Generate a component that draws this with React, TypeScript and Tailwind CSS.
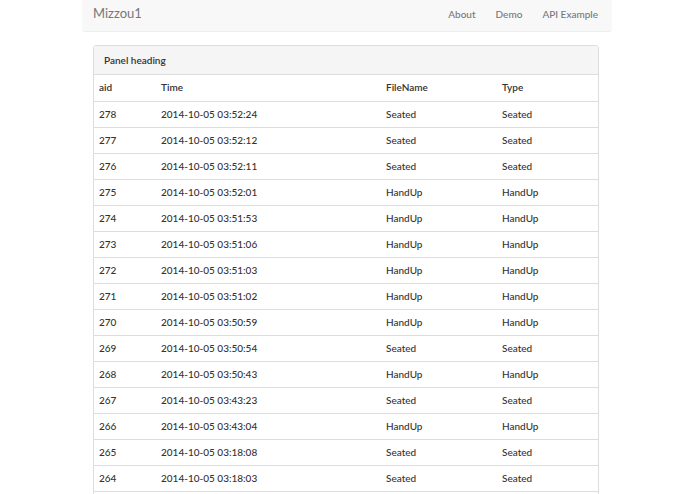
const rows: [number, string, string, string][] = [
  [278, "2014-10-05 03:52:24", "Seated", "Seated"],
  [277, "2014-10-05 03:52:12", "Seated", "Seated"],
  [276, "2014-10-05 03:52:11", "Seated", "Seated"],
  [275, "2014-10-05 03:52:01", "HandUp", "HandUp"],
  [274, "2014-10-05 03:51:53", "HandUp", "HandUp"],
  [273, "2014-10-05 03:51:06", "HandUp", "HandUp"],
  [272, "2014-10-05 03:51:03", "HandUp", "HandUp"],
  [271, "2014-10-05 03:51:02", "HandUp", "HandUp"],
  [270, "2014-10-05 03:50:59", "HandUp", "HandUp"],
  [269, "2014-10-05 03:50:54", "Seated", "Seated"],
  [268, "2014-10-05 03:50:43", "HandUp", "HandUp"],
  [267, "2014-10-05 03:43:23", "Seated", "Seated"],
  [266, "2014-10-05 03:43:04", "HandUp", "HandUp"],
  [265, "2014-10-05 03:18:08", "Seated", "Seated"],
  [264, "2014-10-05 03:18:03", "Seated", "Seated"],
  [263, "2014-10-05 03:17:58", "Seated", "Seated"],
];

export default function App() {
  return (
    <div className="min-h-screen bg-white font-['Lato','Liberation_Sans',sans-serif] text-[#333]">
      <div className="ml-[82px] w-[530px]">
        <nav className="flex h-[32px] items-center justify-between rounded-b-[3px] border-b border-[#eeeeee] bg-[#f8f8f8] pb-[3px] pl-[11px] pr-[14px]">
          <span className="text-[13px] text-[#777]">Mizzou1</span>
          <div className="flex gap-[20px] text-[10px] font-medium text-[#777]">
            <span>About</span>
            <span>Demo</span>
            <span>API Example</span>
          </div>
        </nav>

        <div className="ml-[11px] mt-[13px] w-[506px] rounded-t-[3px] border border-[#dddddd]">
          <div className="flex h-[29px] items-center border-b border-[#dddddd] bg-[#f5f5f5] px-[10px] text-[10px] font-semibold text-[#333]">
            Panel heading
          </div>
          <table className="w-full border-collapse text-[10px] font-medium text-[#333]">
            <thead>
              <tr className="h-[26px]">
                <th className="w-[61px] px-[5px] text-left font-semibold">aid</th>
                <th className="w-[225px] px-[6px] text-left font-semibold">Time</th>
                <th className="w-[116px] px-[6px] text-left font-semibold">FileName</th>
                <th className="px-[6px] text-left font-semibold">Type</th>
              </tr>
            </thead>
            <tbody>
              {rows.map(([aid, time, file, type]) => (
                <tr key={aid} className="h-[26px] border-t border-[#dddddd]">
                  <td className="px-[5px]">{aid}</td>
                  <td className="px-[6px]">{time}</td>
                  <td className="px-[6px]">{file}</td>
                  <td className="px-[6px]">{type}</td>
                </tr>
              ))}
            </tbody>
          </table>
        </div>
      </div>
    </div>
  );
}
